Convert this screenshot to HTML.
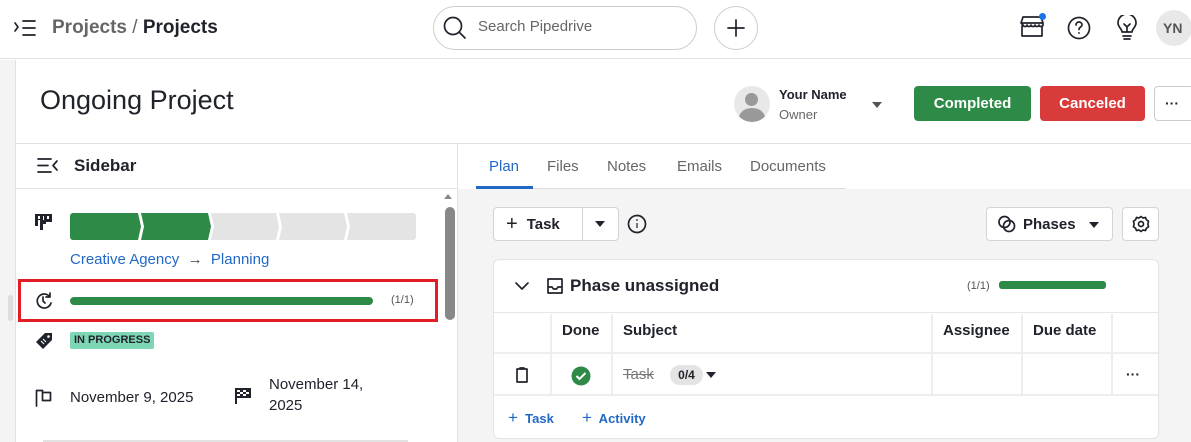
<!DOCTYPE html>
<html><head><meta charset="utf-8"><style>
*{box-sizing:border-box;margin:0;padding:0}
body{width:1191px;height:442px;overflow:hidden;background:#fff;font-family:"Liberation Sans",sans-serif;color:#21232c;position:relative}
.a{position:absolute}
.ic{stroke:#21232c;fill:none;stroke-width:1.7;stroke-linecap:round;stroke-linejoin:round}
.btn{position:absolute;border:1px solid #d4d4d4;border-radius:4px;background:#fff;font-weight:bold;font-size:15px;display:flex;align-items:center}
.th{position:absolute;top:322px;font-weight:bold;font-size:15px}
.vl{position:absolute;width:2px;background:#eee}
</style></head><body>
<!-- top bar -->
<div class="a" style="left:0;top:0;width:1191px;height:59px;border-bottom:1px solid #e2e2e2;background:#fff"></div>
<svg class="a" style="left:14px;top:18px" width="24" height="20"><path class="ic" stroke-width="1.5" d="M1 5l3 4-3 4M9 3h12M9 10h12M9 17h12" stroke="#444"/></svg>
<div class="a" style="left:52px;top:17px;font-size:19px;color:#666;font-weight:bold">Projects <span style="font-weight:normal">/</span> <span style="color:#21232c">Projects</span></div>
<div class="a" style="left:433px;top:6px;width:264px;height:44px;border:1px solid #ccc;border-radius:22px"></div>
<svg class="a" style="left:441px;top:14px" width="28" height="28"><circle class="ic" cx="12" cy="12" r="8.5" stroke="#444"/><path class="ic" d="M18 18l6 6" stroke="#444"/></svg>
<div class="a" style="left:478px;top:18px;font-size:15px;color:#666">Search Pipedrive</div>
<div class="a" style="left:714px;top:6px;width:44px;height:44px;border:1px solid #ccc;border-radius:50%"></div>
<svg class="a" style="left:726px;top:18px" width="20" height="20"><path class="ic" stroke-width="1.5" d="M10 2v16M2 10h16"/></svg>
<svg class="a" style="left:1019px;top:15px" width="26" height="24"><path class="ic" stroke="#555" stroke-width="1.6" d="M2 8l2-6h18l2 6v2c0 2-4 2-4 0 0 2-4 2-4 0 0 2-4 2-4 0 0 2-4 2-4 0 0 2-4 2-4 0zM3 11v10h20V11M3 8h21"/></svg>
<div class="a" style="left:1039px;top:13px;width:7px;height:7px;border-radius:50%;background:#1a73e8"></div>
<svg class="a" style="left:1067px;top:16px" width="24" height="24"><circle class="ic" cx="12" cy="12" r="10.5" stroke="#444" stroke-width="1.5"/><path class="ic" stroke="#444" stroke-width="1.5" d="M9 9c0-2 1.5-3 3-3s3 1 3 3c0 2-3 2-3 4.5"/><circle cx="12" cy="17" r="1" fill="#444"/></svg>
<svg class="a" style="left:1116px;top:15px" width="22" height="26"><path class="ic" stroke="#444" stroke-width="1.5" d="M6 17c0-3-4-5-4-9a9 9 0 0118 0c0 4-4 6-4 9zM7 21h8M8 24h6M8 9l3 3 3-3M11 12v5"/></svg>
<div class="a" style="left:1156px;top:10px;width:36px;height:36px;border-radius:50%;background:#e8e8e8;font-size:14px;font-weight:bold;color:#555;line-height:36px;padding-left:7px">YN</div>
<!-- left strip -->
<div class="a" style="left:0;top:60px;width:16px;height:382px;background:#f4f4f4;border-right:1px solid #e2e2e2"></div>
<div class="a" style="left:8px;top:295px;width:5px;height:26px;border-radius:3px;background:#ddd"></div>
<!-- header -->
<div class="a" style="left:40px;top:85px;font-size:27px">Ongoing Project</div>
<div class="a" style="left:734px;top:86px;width:36px;height:36px;border-radius:50%;background:#e8e8e8;overflow:hidden"><div class="a" style="left:11px;top:7px;width:13px;height:13px;border-radius:50%;background:#999"></div><div class="a" style="left:5px;top:22px;width:26px;height:20px;border-radius:50%;background:#999"></div></div>
<div class="a" style="left:779px;top:87px;font-size:13px;font-weight:bold">Your Name</div>
<div class="a" style="left:779px;top:107px;font-size:13px;color:#666">Owner</div>
<div class="a" style="left:872px;top:102px;border:5px solid transparent;border-top:6px solid #555"></div>
<div class="a" style="left:914px;top:86px;width:117px;height:35px;border-radius:4px;background:#2e8b47;color:#fff;font-weight:bold;font-size:15px;text-align:center;line-height:35px">Completed</div>
<div class="a" style="left:1040px;top:86px;width:105px;height:35px;border-radius:4px;background:#d93a3a;color:#fff;font-weight:bold;font-size:15px;text-align:center;line-height:35px">Canceled</div>
<div class="a" style="left:1154px;top:86px;width:40px;height:35px;border-radius:4px;border:1px solid #ccc;font-weight:bold;text-align:center;line-height:32px;font-size:14px;padding-right:4px">···</div>
<div class="a" style="left:16px;top:143px;width:1175px;height:1px;background:#e2e2e2"></div>
<!-- sidebar -->
<div class="a" style="left:457px;top:144px;width:1px;height:298px;background:#e2e2e2"></div>
<svg class="a" style="left:37px;top:157px" width="22" height="18"><path class="ic" stroke-width="1.5" d="M1 2h13M1 8.5h10M1 15h13M20 4l-4 4.5 4 4.5"/></svg>
<div class="a" style="left:74px;top:156px;font-size:17px;font-weight:bold">Sidebar</div>
<div class="a" style="left:16px;top:188px;width:441px;height:1px;background:#e2e2e2"></div>
<div class="a" style="left:444px;top:194px;border:4px solid transparent;border-bottom:5px solid #888;border-top:0"></div>
<div class="a" style="left:445px;top:207px;width:10px;height:113px;border-radius:5px;background:#888"></div>
<svg class="a" style="left:35px;top:214px" width="18" height="16"><path fill="#21232c" d="M0 0h17v8h-6v2H8v6H5V6H3v6H0z"/><path fill="#fff" d="M3 2h2v3H3zM8 2h1v4H8zM12 2h2v3h-2z"/></svg>
<svg class="a" style="left:70px;top:213px" width="346" height="27"><path fill="#2e8b47" d="M3 0h65l3 13.5-3 13.5H3a3 3 0 01-3-3V3a3 3 0 013-3zM71 0h67l3 13.5-3 13.5H71l3-13.5z"/><path fill="#e4e4e4" d="M141 0h65l3 13.5-3 13.5h-65l3-13.5zM209 0h65l3 13.5-3 13.5h-65l3-13.5zM277 0h66a3 3 0 013 3v21a3 3 0 01-3 3h-66l3-13.5z"/></svg>
<div class="a" style="left:70px;top:251px;font-size:15px;color:#2269c7">Creative Agency <span style="color:#444">&nbsp;→&nbsp;</span> Planning</div>
<div class="a" style="left:18px;top:279px;width:420px;height:43px;border:3px solid #e11d25"></div>
<svg class="a" style="left:35px;top:292px" width="18" height="18"><path class="ic" stroke-width="1.8" d="M15 5A7 7 0 1016 11M15 1v4h-4M8 5v4l2 2"/></svg>
<div class="a" style="left:70px;top:297px;width:303px;height:8px;border-radius:4px;background:#2e8b47"></div>
<div class="a" style="left:391px;top:294px;font-size:11px;color:#555">(1/1)</div>
<svg class="a" style="left:35px;top:332px" width="18" height="18"><path fill="#21232c" d="M10 1h7v7l-9 9-7-7z"/><circle cx="13.5" cy="4.5" r="1.3" fill="#fff"/><path stroke="#fff" stroke-width="1" d="M6 9l3 3M8 7l3 3"/></svg>
<div class="a" style="left:70px;top:332px;height:17px;padding:0 4px;background:#7dd6b4;border-radius:2px;font-size:11px;font-weight:bold;line-height:17px;color:#21232c">IN PROGRESS</div>
<svg class="a" style="left:35px;top:389px" width="18" height="18"><path class="ic" d="M1.5 17V1.5h6v2h8v8h-8v-8"/></svg>
<div class="a" style="left:70px;top:389px;font-size:15px">November 9, 2025</div>
<svg class="a" style="left:234px;top:387px" width="18" height="18"><path fill="#21232c" d="M1 1h16v10H3v6H1z"/><path fill="#fff" d="M3 3h3v2H3zM9 3h3v2H9zM6 5h3v2H6zM12 5h3v2h-3zM3 7h3v2H3zM9 7h3v2H9z"/></svg>
<div class="a" style="left:269px;top:374px;font-size:15px;line-height:21px">November 14,<br>2025</div>
<div class="a" style="left:43px;top:440px;width:365px;height:2px;background:#e2e2e2"></div>
<!-- tabs -->
<div class="a" style="left:458px;top:189px;width:733px;height:253px;background:#f4f4f4"></div>
<div class="a" style="left:476px;top:188px;width:370px;height:1px;background:#ddd"></div>
<div class="a" style="left:489px;top:158px;font-size:15px;color:#2269c7">Plan</div>
<div class="a" style="left:476px;top:186px;width:57px;height:3px;background:#2269c7"></div>
<div class="a" style="left:547px;top:158px;font-size:15px;color:#666">Files</div>
<div class="a" style="left:607px;top:158px;font-size:15px;color:#666">Notes</div>
<div class="a" style="left:677px;top:158px;font-size:15px;color:#666">Emails</div>
<div class="a" style="left:750px;top:158px;font-size:15px;color:#666">Documents</div>
<!-- toolbar -->
<div class="btn" style="left:493px;top:207px;width:126px;height:34px"><span style="margin-left:12px;font-size:20px;font-weight:normal">+</span><span style="margin-left:9px">Task</span><div style="position:absolute;left:88px;top:0;width:1px;height:32px;background:#d4d4d4"></div><div style="position:absolute;left:101px;top:13px;border:5px solid transparent;border-top:6px solid #21232c"></div></div>
<svg class="a" style="left:627px;top:214px" width="20" height="20"><circle class="ic" cx="10" cy="10" r="8.5" stroke="#555" stroke-width="1.4"/><path d="M10 9v5" stroke="#555" stroke-width="1.6"/><circle cx="10" cy="6" r="1" fill="#555"/></svg>
<div class="btn" style="left:986px;top:207px;width:127px;height:34px"><svg style="margin-left:10px" width="20" height="20"><circle class="ic" cx="7.5" cy="8" r="5.5"/><circle class="ic" cx="12" cy="12" r="5.5"/></svg><span style="margin-left:6px">Phases</span><div style="position:absolute;left:102px;top:14px;border:5px solid transparent;border-top:6px solid #21232c"></div></div>
<div class="btn" style="left:1122px;top:207px;width:37px;height:34px;justify-content:center"><svg width="18" height="18"><path class="ic" stroke-width="1.6" d="M9 1.5l2 1.5 2.5-.5 1 2.3 2 1.4-.6 2.8.6 2.8-2 1.4-1 2.3L11 15 9 16.5 7 15l-2.5.5-1-2.3-2-1.4.6-2.8-.6-2.8 2-1.4 1-2.3L7 3z"/><circle class="ic" cx="9" cy="9" r="2.5" stroke-width="1.6"/></svg></div>
<!-- card -->
<div class="a" style="left:493px;top:259px;width:666px;height:180px;background:#fff;border:1px solid #e4e4e4;border-radius:6px"></div>
<svg class="a" style="left:514px;top:279px" width="16" height="14"><path class="ic" stroke-width="1.6" d="M2 4l6 6 6-6"/></svg>
<svg class="a" style="left:546px;top:277px" width="18" height="18"><path class="ic" stroke-width="1.6" d="M2 2h14v14H2zM2 10h4l1.5 2h3L12 10h4"/></svg>
<div class="a" style="left:570px;top:276px;font-size:17px;font-weight:bold">Phase unassigned</div>
<div class="a" style="left:967px;top:280px;font-size:11px;color:#555">(1/1)</div>
<div class="a" style="left:999px;top:281px;width:107px;height:8px;border-radius:3px;background:#2e8b47"></div>
<div class="a" style="left:494px;top:312px;width:664px;height:1px;background:#e6e6e6"></div>
<div class="th" style="left:562px">Done</div>
<div class="th" style="left:623px">Subject</div>
<div class="th" style="left:943px">Assignee</div>
<div class="th" style="left:1033px">Due date</div>
<div class="vl" style="left:550px;top:314px;height:80px"></div>
<div class="vl" style="left:611px;top:314px;height:80px"></div>
<div class="vl" style="left:931px;top:314px;height:80px"></div>
<div class="vl" style="left:1021px;top:314px;height:80px"></div>
<div class="vl" style="left:1111px;top:314px;height:80px"></div>
<div class="a" style="left:494px;top:352px;width:664px;height:2px;background:#eee"></div>
<div class="a" style="left:494px;top:394px;width:664px;height:2px;background:#eee"></div>
<svg class="a" style="left:514px;top:366px" width="16" height="18"><path class="ic" stroke-width="1.8" d="M3 3h10v13H3zM6 2h4"/></svg>
<svg class="a" style="left:571px;top:366px" width="20" height="20"><circle cx="10" cy="10" r="9.5" fill="#2e8b47"/><path d="M5.5 10l3 3 6-6" stroke="#fff" stroke-width="2" fill="none"/></svg>
<div class="a" style="left:623px;top:366px;font-size:15px;color:#777;text-decoration:line-through">Task</div>
<div class="a" style="left:670px;top:365px;width:33px;height:20px;border-radius:10px;background:#e4e4e4;font-size:12px;font-weight:bold;text-align:center;line-height:20px">0/4</div>
<div class="a" style="left:706px;top:372px;border:5px solid transparent;border-top:6px solid #21232c"></div>
<div class="a" style="left:1126px;top:366px;font-size:14px;font-weight:bold">···</div>
<div class="a" style="left:508px;top:408px;font-size:13px;font-weight:bold;color:#2269c7"><span style="font-size:17px;font-weight:normal">+</span>&nbsp; Task</div>
<div class="a" style="left:582px;top:408px;font-size:13px;font-weight:bold;color:#2269c7"><span style="font-size:17px;font-weight:normal">+</span>&nbsp; Activity</div>
</body></html>
